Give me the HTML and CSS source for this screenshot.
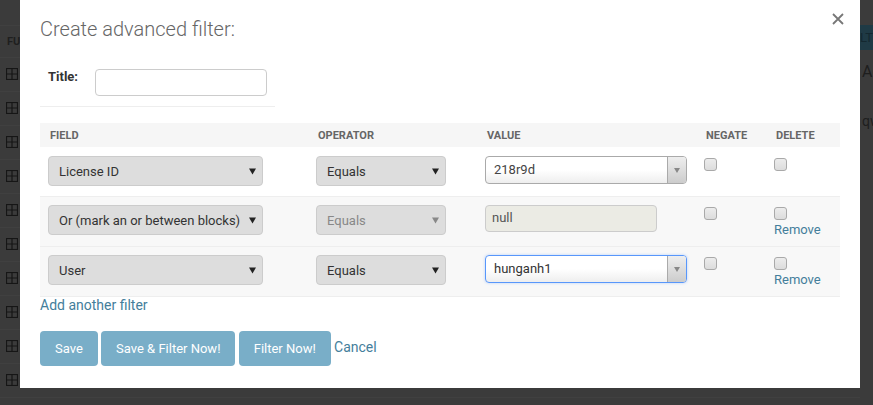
FILE: index.html
```html
<!DOCTYPE html>
<html>
<head>
<meta charset="utf-8">
<link rel="stylesheet" href="styles.css">
</head>
<body>
<div class="page">
  <div class="bg-main">
    <div class="bg-top"></div>
    <div class="bg-head">FU</div>
    <div class="bg-row"><svg class="bg-ico" viewBox="0 0 12 12"><rect x="0.5" y="0.5" width="11" height="11"/><path d="M6 0.5V11.5M0.5 6H11.5"/></svg></div>
    <div class="bg-row"><svg class="bg-ico" viewBox="0 0 12 12"><rect x="0.5" y="0.5" width="11" height="11"/><path d="M6 0.5V11.5M0.5 6H11.5"/></svg></div>
    <div class="bg-row"><svg class="bg-ico" viewBox="0 0 12 12"><rect x="0.5" y="0.5" width="11" height="11"/><path d="M6 0.5V11.5M0.5 6H11.5"/></svg></div>
    <div class="bg-row"><svg class="bg-ico" viewBox="0 0 12 12"><rect x="0.5" y="0.5" width="11" height="11"/><path d="M6 0.5V11.5M0.5 6H11.5"/></svg></div>
    <div class="bg-row"><svg class="bg-ico" viewBox="0 0 12 12"><rect x="0.5" y="0.5" width="11" height="11"/><path d="M6 0.5V11.5M0.5 6H11.5"/></svg></div>
    <div class="bg-row"><svg class="bg-ico" viewBox="0 0 12 12"><rect x="0.5" y="0.5" width="11" height="11"/><path d="M6 0.5V11.5M0.5 6H11.5"/></svg></div>
    <div class="bg-row"><svg class="bg-ico" viewBox="0 0 12 12"><rect x="0.5" y="0.5" width="11" height="11"/><path d="M6 0.5V11.5M0.5 6H11.5"/></svg></div>
    <div class="bg-row"><svg class="bg-ico" viewBox="0 0 12 12"><rect x="0.5" y="0.5" width="11" height="11"/><path d="M6 0.5V11.5M0.5 6H11.5"/></svg></div>
    <div class="bg-row"><svg class="bg-ico" viewBox="0 0 12 12"><rect x="0.5" y="0.5" width="11" height="11"/><path d="M6 0.5V11.5M0.5 6H11.5"/></svg></div>
    <div class="bg-row"><svg class="bg-ico" viewBox="0 0 12 12"><rect x="0.5" y="0.5" width="11" height="11"/><path d="M6 0.5V11.5M0.5 6H11.5"/></svg></div>
  </div>
  <div class="bg-side">
    <div class="bg-side-head">LTER</div>
    <div class="bg-side-item">Ac</div>
    <div class="bg-side-item small">qw</div>
  </div>
</div>

<div class="modal">
  <svg class="close" viewBox="0 0 12 12"><path d="M1 1L11 11M11 1L1 11"/></svg>
  <h2 class="modal-title">Create advanced filter:</h2>

  <div class="title-row">
    <label class="title-label">Title:</label>
    <div class="text-input"></div>
  </div>

  <div class="filter-table">
    <div class="row head">
      <div class="th">Field</div>
      <div class="th">Operator</div>
      <div class="th">Value</div>
      <div class="th">Negate</div>
      <div class="th">Delete</div>
    </div>

    <div class="row white">
      <div class="td"><div class="select wide"><span>License ID</span><svg class="arrow" viewBox="0 0 8 7"><path d="M0 0H8L4 7Z"/></svg></div></div>
      <div class="td"><div class="select op"><span>Equals</span><svg class="arrow" viewBox="0 0 8 7"><path d="M0 0H8L4 7Z"/></svg></div></div>
      <div class="td"><div class="combo"><span class="combo-text">218r9d</span><span class="combo-btn"><svg viewBox="0 0 6 5"><path d="M0 0H6L3 5Z"/></svg></span></div></div>
      <div class="td"><span class="check"></span></div>
      <div class="td"><span class="check"></span></div>
    </div>

    <div class="row grey">
      <div class="td"><div class="select wide"><span>Or (mark an or between blocks)</span><svg class="arrow" viewBox="0 0 8 7"><path d="M0 0H8L4 7Z"/></svg></div></div>
      <div class="td"><div class="select op disabled"><span>Equals</span><svg class="arrow" viewBox="0 0 8 7"><path d="M0 0H8L4 7Z"/></svg></div></div>
      <div class="td"><div class="null-input">null</div></div>
      <div class="td"><span class="check"></span></div>
      <div class="td"><span class="check"></span><a class="link remove">Remove</a></div>
    </div>

    <div class="row grey">
      <div class="td"><div class="select wide"><span>User</span><svg class="arrow" viewBox="0 0 8 7"><path d="M0 0H8L4 7Z"/></svg></div></div>
      <div class="td"><div class="select op"><span>Equals</span><svg class="arrow" viewBox="0 0 8 7"><path d="M0 0H8L4 7Z"/></svg></div></div>
      <div class="td"><div class="combo focus"><span class="combo-text">hunganh1</span><span class="combo-btn"><svg viewBox="0 0 6 5"><path d="M0 0H6L3 5Z"/></svg></span></div></div>
      <div class="td"><span class="check"></span></div>
      <div class="td"><span class="check"></span><a class="link remove">Remove</a></div>
    </div>
  </div>

  <a class="link add">Add another filter</a>

  <div class="actions">
    <span class="btn">Save</span>
    <span class="btn">Save &amp; Filter Now!</span>
    <span class="btn">Filter Now!</span>
    <a class="link cancel">Cancel</a>
  </div>
</div>
</body>
</html>
```

FILE: styles.css
```css
* { box-sizing: border-box; }
html, body { margin: 0; padding: 0; }
body {
  width: 873px;
  height: 405px;
  overflow: hidden;
  background: #3b3b3b;
  font-family: Roboto, "Liberation Sans", Arial, sans-serif;
}

/* background page (under the overlay) */
.page {
  display: flex;
  height: 405px;
}
.bg-main {
  width: 860px;
  flex: none;
}
.bg-top {
  height: 26px;
  border-bottom: 1px solid #404040;
}
.bg-head {
  height: 32px;
  padding: 9px 0 0 7px;
  font-size: 11px;
  font-weight: 700;
  color: #1f1f1f;
  border-bottom: 1px solid #404040;
}
.bg-row {
  height: 34px;
  padding: 10px 0 0 6px;
  border-bottom: 1px solid #404040;
}
.bg-ico {
  display: block;
  width: 12px;
  height: 12px;
  fill: none;
  stroke: #161616;
  stroke-width: 1.2;
}
.bg-side {
  flex: 1;
  padding-top: 25px;
  overflow: hidden;
}
.bg-side-head {
  height: 25px;
  background: #1f3a45;
  color: #142830;
  font-size: 13px;
  padding: 5px 0 0 0;
  white-space: nowrap;
}
.bg-side-item {
  font-size: 16px;
  color: #1e1e1e;
  padding: 12px 0 0 2px;
  white-space: nowrap;
}
.bg-side-item.small {
  font-size: 14px;
  padding-top: 32px;
}

/* modal */
.modal {
  position: fixed;
  left: 20px;
  top: 0;
  width: 840px;
  height: 388px;
  background: #fff;
  padding: 17px 20px 0 20px;
}
.close {
  position: absolute;
  top: 13px;
  right: 16px;
  width: 12px;
  height: 12px;
  fill: none;
  stroke: #777;
  stroke-width: 1.8;
}
.modal-title {
  margin: 0;
  font-size: 20px;
  line-height: 24px;
  font-weight: 300;
  color: #666;
}

.title-row {
  width: 235px;
  margin-top: 28px;
  padding: 0 0 10px 8px;
  border-bottom: 1px solid #eee;
  display: flex;
  align-items: flex-start;
}
.title-label {
  width: 47px;
  flex: none;
  font-size: 13px;
  font-weight: 700;
  color: #333;
  line-height: 16px;
  padding-top: 0;
}
.text-input {
  width: 172px;
  height: 27px;
  border: 1px solid #ccc;
  border-radius: 4px;
  background: #fff;
}

/* table */
.filter-table {
  margin-top: 16px;
  width: 800px;
}
.row {
  display: grid;
  grid-template-columns: 268px 169px 219px 70px 74px;
}
.row.head {
  height: 24px;
  background: #f6f6f6;
  align-items: center;
}
.th {
  padding-left: 10px;
  font-size: 11px;
  font-weight: 700;
  color: #666;
  text-transform: uppercase;
  line-height: 13px;
}
.row.white, .row.grey {
  height: 50px;
  border-bottom: 1px solid #eee;
}
.row.white { background: #fff; }
.row.grey { background: #f8f8f8; }
.td {
  padding: 8px 0 0 8px;
}
.row.white .td { padding-top: 9px; }

.select {
  height: 30px;
  border: 1px solid #ccc;
  border-radius: 4px;
  background: #ddd;
  display: flex;
  align-items: center;
  justify-content: space-between;
  padding: 0 6px 0 10px;
  font-size: 13px;
  color: #333;
}
.select.wide { width: 215px; }
.select.op { width: 130px; }
.select .arrow {
  width: 7px;
  height: 7px;
  fill: #222;
}
.select.disabled { color: #888; }
.select.disabled .arrow { fill: #888; }

.combo {
  width: 202px;
  height: 28px;
  border: 1px solid #aaa;
  border-radius: 4px;
  background: linear-gradient(#fff 0%, #fff 50%, #eee 100%);
  display: flex;
  align-items: stretch;
  overflow: hidden;
}
.combo.focus {
  border-color: #5897fb;
  box-shadow: 0 0 3px rgba(88, 151, 251, 0.4);
}
.combo-text {
  flex: 1;
  padding-left: 8px;
  font-size: 13px;
  line-height: 26px;
  color: #444;
}
.combo.focus .combo-text { color: #333; }
.combo-btn {
  width: 19px;
  border-left: 1px solid #aaa;
  background: linear-gradient(#eee, #ccc);
  display: flex;
  align-items: center;
  justify-content: center;
}
.combo-btn svg {
  width: 6px;
  height: 5px;
  fill: #888;
}

.null-input {
  width: 172px;
  height: 27px;
  border: 1px solid #ccc;
  border-radius: 4px;
  background: #ebebe4;
  padding-left: 6px;
  font-size: 13px;
  line-height: 24px;
  color: #555;
}

.check {
  display: block;
  width: 13px;
  height: 13px;
  margin-top: 2px;
  border: 1px solid #a9a9a9;
  border-radius: 3px;
  background: linear-gradient(#ececec, #dcdcdc);
}

.link {
  color: #447e9b;
  text-decoration: none;
}
.remove {
  display: block;
  font-size: 13px;
  line-height: 15px;
  margin-top: 2px;
}
.add {
  display: block;
  margin-top: 0;
  font-size: 14px;
  line-height: 17px;
}

.actions {
  margin-top: 17px;
  font-size: 13px;
}
.btn {
  display: inline-block;
  background: #79aec8;
  color: #fff;
  border-radius: 4px;
  padding: 10px 15px;
  font-size: 13px;
  line-height: 15px;
}
.cancel {
  font-size: 14px;
  position: relative;
  top: -1px;
}
```
